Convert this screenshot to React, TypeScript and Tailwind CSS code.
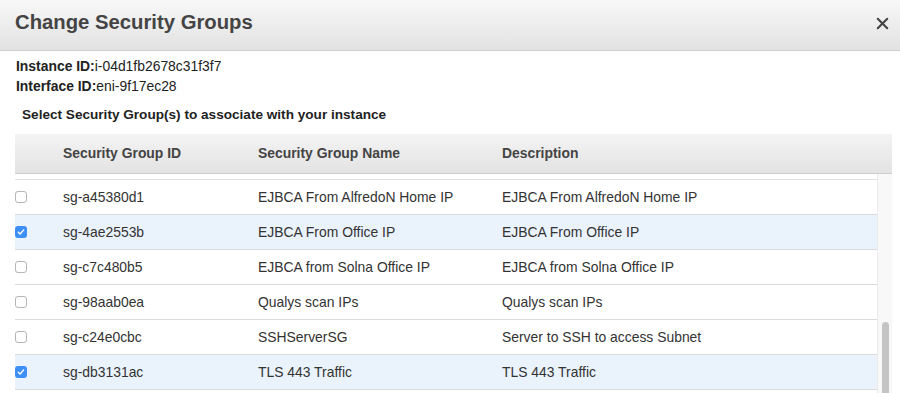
import { X } from "lucide-react";

interface Group {
  id: string;
  name: string;
  description: string;
  checked: boolean;
}

const groups: Group[] = [
  { id: "sg-a45380d1", name: "EJBCA From AlfredoN Home IP", description: "EJBCA From AlfredoN Home IP", checked: false },
  { id: "sg-4ae2553b", name: "EJBCA From Office IP", description: "EJBCA From Office IP", checked: true },
  { id: "sg-c7c480b5", name: "EJBCA from Solna Office IP", description: "EJBCA from Solna Office IP", checked: false },
  { id: "sg-98aab0ea", name: "Qualys scan IPs", description: "Qualys scan IPs", checked: false },
  { id: "sg-c24e0cbc", name: "SSHServerSG", description: "Server to SSH to access Subnet", checked: false },
  { id: "sg-db3131ac", name: "TLS 443 Traffic", description: "TLS 443 Traffic", checked: true },
];

function Checkbox({ checked }: { checked: boolean }) {
  if (checked) {
    return (
      <span className="flex h-[12px] w-[12px] items-center justify-center rounded-[3px] bg-[#3d8ef5]">
        <svg width="8" height="8" viewBox="0 0 8 8" fill="none">
          <path d="M1.3 4.2 L3.1 6 L6.7 1.9" stroke="white" strokeWidth="1.4" strokeLinecap="round" strokeLinejoin="round" />
        </svg>
      </span>
    );
  }
  return <span className="block h-[12px] w-[12px] rounded-[3px] border border-[#b5b5b5] bg-white" />;
}

export default function App() {
  return (
    <div className="h-[393px] w-[900px] overflow-hidden bg-white font-['Liberation_Sans',Arial,sans-serif] text-[#333]">
      <div className="flex h-[51px] items-center justify-between border-b border-[#cfcfcf] bg-gradient-to-b from-[#f8f8f8] to-[#e2e2e2] pl-[15px] pr-[8px]">
        <h1 className="-mt-[5px] text-[20.3px] font-bold text-[#444]">Change Security Groups</h1>
        <X size={19} strokeWidth={2.6} className="-mt-[3px] text-[#444]" />
      </div>

      <div className="pl-[16px] pt-[5px] text-[13.9px] leading-[20px] text-[#222]">
        <div>
          <span className="font-bold">Instance ID:</span>i-04d1fb2678c31f3f7
        </div>
        <div>
          <span className="font-bold">Interface ID:</span>eni-9f17ec28
        </div>
      </div>

      <div className="mt-[9px] pl-[22px] text-[13.6px] font-bold leading-[20px] text-[#222]">
        Select Security Group(s) to associate with your instance
      </div>

      <div className="ml-[15px] mr-[8px] mt-[9px]">
        <div className="flex h-[40px] items-center border-b border-[#cdcdcd] bg-gradient-to-b from-[#f4f4f4] to-[#e3e3e3] text-[13.9px] font-bold text-[#444]">
          <div className="w-[48px]" />
          <div className="w-[195px]">Security Group ID</div>
          <div className="w-[244px]">Security Group Name</div>
          <div>Description</div>
        </div>
        <div className="flex">
          <div className="flex-1 pt-[5px]">
            <div className="border-b border-[#e0e0e0]" />
            {groups.map((g) => (
              <div
                key={g.id}
                className={`flex h-[35px] items-center border-b border-[#dcdcdc] text-[13.9px] ${g.checked ? "bg-[#eaf2fc]" : "bg-white"}`}
              >
                <div className="w-[48px]">
                  <Checkbox checked={g.checked} />
                </div>
                <div className="w-[195px]">{g.id}</div>
                <div className="w-[244px]">{g.name}</div>
                <div>{g.description}</div>
              </div>
            ))}
          </div>
          <div className="w-[15px] border-l border-[#ececec] bg-[#f8f8f8] pt-[148px]">
            <div className="mx-auto h-[80px] w-[7px] rounded-full bg-[#c4c4c4]" />
          </div>
        </div>
      </div>
    </div>
  );
}
